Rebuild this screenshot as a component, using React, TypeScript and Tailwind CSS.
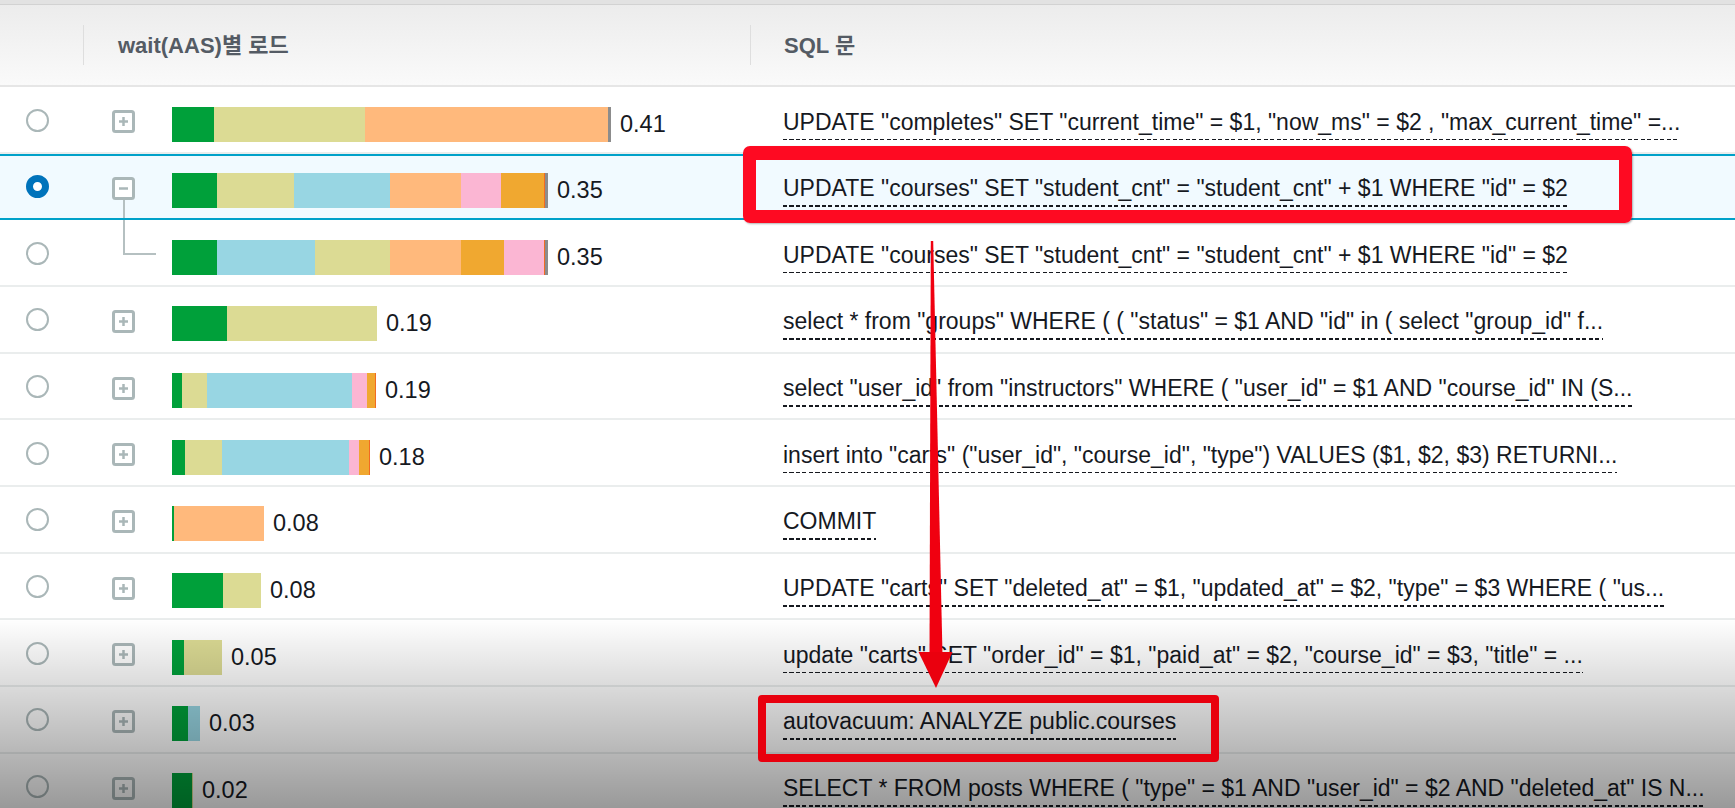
import clsx from "clsx";

type Seg = [keyof typeof COLORS, number];

const COLORS = {
  g: "bg-[#00a03a]",
  k: "bg-[#dcdb94]",
  b: "bg-[#98d6e3]",
  p: "bg-[#ffb97c]",
  pk: "bg-[#fbb6d3]",
  o: "bg-[#f0a830]",
  r: "bg-[#f26b21]",
  x: "bg-[#8c8c8c]",
};

type Row = {
  segs: Seg[];
  load: string;
  sql: string;
  selected?: boolean;
  open?: boolean;
  child?: boolean;
};

const ROWS: Row[] = [
  {
    segs: [["g", 42], ["k", 151], ["p", 243], ["x", 3]],
    load: "0.41",
    sql: 'UPDATE "completes" SET "current_time" = $1, "now_ms" = $2 , "max_current_time" =...',
  },
  {
    segs: [["g", 45], ["k", 77], ["b", 96], ["p", 71], ["pk", 40], ["o", 43], ["r", 1], ["x", 3]],
    load: "0.35",
    sql: 'UPDATE "courses" SET "student_cnt" = "student_cnt" + $1 WHERE "id" = $2',
    selected: true,
    open: true,
  },
  {
    segs: [["g", 45], ["b", 98], ["k", 75], ["p", 71], ["o", 43], ["pk", 40], ["r", 1], ["x", 3]],
    load: "0.35",
    sql: 'UPDATE "courses" SET "student_cnt" = "student_cnt" + $1 WHERE "id" = $2',
    child: true,
  },
  {
    segs: [["g", 55], ["k", 150]],
    load: "0.19",
    sql: 'select * from "groups" WHERE ( ( "status" = $1 AND "id" in ( select "group_id" f...',
  },
  {
    segs: [["g", 10], ["k", 25], ["b", 145], ["pk", 15], ["o", 8], ["r", 1]],
    load: "0.19",
    sql: 'select "user_id" from "instructors" WHERE ( "user_id" = $1 AND "course_id" IN (S...',
  },
  {
    segs: [["g", 13], ["k", 37], ["b", 127], ["pk", 10], ["o", 10], ["r", 1]],
    load: "0.18",
    sql: 'insert into "carts" ("user_id", "course_id", "type") VALUES ($1, $2, $3) RETURNI...',
  },
  { segs: [["g", 2], ["p", 90]], load: "0.08", sql: "COMMIT" },
  {
    segs: [["g", 51], ["k", 38]],
    load: "0.08",
    sql: 'UPDATE "carts" SET "deleted_at" = $1, "updated_at" = $2, "type" = $3 WHERE ( "us...',
  },
  {
    segs: [["g", 12], ["k", 38]],
    load: "0.05",
    sql: 'update "carts" SET "order_id" = $1, "paid_at" = $2, "course_id" = $3, "title" = ...',
  },
  { segs: [["g", 16], ["b", 12]], load: "0.03", sql: "autovacuum: ANALYZE public.courses" },
  {
    segs: [["g", 20], ["k", 1]],
    load: "0.02",
    sql: 'SELECT * FROM posts WHERE ( "type" = $1 AND "user_id" = $2 AND "deleted_at" IS N...',
  },
];

function ExpandIcon({ open }: { open?: boolean }) {
  return (
    <svg width="23" height="23" viewBox="0 0 23 23" className="block">
      <rect x="1.5" y="1.5" width="20" height="20" rx="2" fill="#fff" stroke="#aab7b8" strokeWidth="3" />
      <path d="M7 11.5h9" stroke="#aab7b8" strokeWidth="2.5" />
      {!open && <path d="M11.5 7v9" stroke="#aab7b8" strokeWidth="2.5" />}
    </svg>
  );
}

function TableRow({ row }: { row: Row }) {
  return (
    <div
      className={clsx(
        "grid h-[66.67px] grid-cols-[83px_667px_1fr] border-b-2",
        row.selected
          ? "border-b-[#00a1c9] bg-[#f1faff] shadow-[inset_0_2px_0_#00a1c9]"
          : "border-b-[#eaeded] bg-white",
      )}
    >
      <div className="pl-[25.5px] pt-[21.5px]">
        <div
          className={clsx(
            "h-[23px] w-[23px] rounded-full bg-white",
            row.selected ? "border-[7px] border-[#0073bb]" : "border-2 border-[#aab7b8]",
          )}
        />
      </div>

      <div className="flex items-start">
        {row.child ? (
          <div className="ml-[40px] h-[35px] w-[33px] border-b-2 border-l-2 border-[#b5c0c1]" />
        ) : (
          <div className="ml-[29px] flex h-full w-[23px] flex-col items-center pt-[23px]">
            <ExpandIcon open={row.open} />
            {row.open && <div className="w-[2px] flex-1 bg-[#b5c0c1]" />}
          </div>
        )}
        <div className={clsx("mt-[19.5px] flex items-center", row.child ? "ml-[16px]" : "ml-[37px]")}>
          <div className="flex h-[35px]">
            {row.segs.map(([c, w], i) => (
              <div key={i} className={COLORS[c]} style={{ width: w }} />
            ))}
          </div>
          <span className="ml-[9px] text-[23.5px] leading-[27px] text-[#16191f]">{row.load}</span>
        </div>
      </div>

      <div className="pl-[33px] pt-[21.5px]">
        <div className="inline-flex flex-col">
          <span className="whitespace-nowrap text-[23px] leading-[27px] text-[#16191f]">{row.sql}</span>
          <span className="mt-[3px] h-[1.5px] bg-[repeating-linear-gradient(90deg,#16191f_0_4px,transparent_4px_6.5px)]" />
        </div>
      </div>
    </div>
  );
}

export default function App() {
  return (
    <div className="relative h-[808px] w-[1735px] overflow-hidden bg-white font-['Liberation_Sans','Noto_Sans_CJK_KR',sans-serif]">
      <div className="h-[5px] border-b border-[#d2d2d2] bg-[#e2e2e2]" />
      <div className="grid h-[82px] grid-cols-[83px_667px_1fr] items-center border-b-2 border-[#e6e6e6] bg-linear-to-b from-[#ececec] to-[#fafafa] text-[22px] font-bold text-[#545b64]">
        <div />
        <div className="flex h-[40px] items-center border-l border-[#dedede] pl-[34px]">wait(AAS)별 로드</div>
        <div className="flex h-[40px] items-center border-l border-[#dedede] pl-[33px]">SQL 문</div>
      </div>

      {ROWS.map((row, i) => (
        <TableRow key={i} row={row} />
      ))}

      {/* video-frame darkening at the bottom */}
      <div className="pointer-events-none absolute inset-x-0 top-[618px] bottom-0 bg-linear-to-b from-transparent to-black/40" />

      {/* annotations */}
      <div className="pointer-events-none absolute left-[743px] top-[146px] h-[77px] w-[889px] rounded-[7px] border-[13px] border-t-[14px] border-[#fe0a22] shadow-[1px_1px_2px_rgba(0,0,0,0.3)]" />
      <div className="pointer-events-none absolute left-[758px] top-[695px] h-[67px] w-[461px] rounded-[4px] border-[8px] border-[#e8000e]" />
      <svg className="pointer-events-none absolute left-0 top-0" width="1735" height="808">
        <polygon points="930.8,241 933.2,241 942.5,655 929.5,655" fill="#f00010" />
        <polygon points="918.5,652 952.5,652 936,688" fill="#ea000e" />
      </svg>
    </div>
  );
}
